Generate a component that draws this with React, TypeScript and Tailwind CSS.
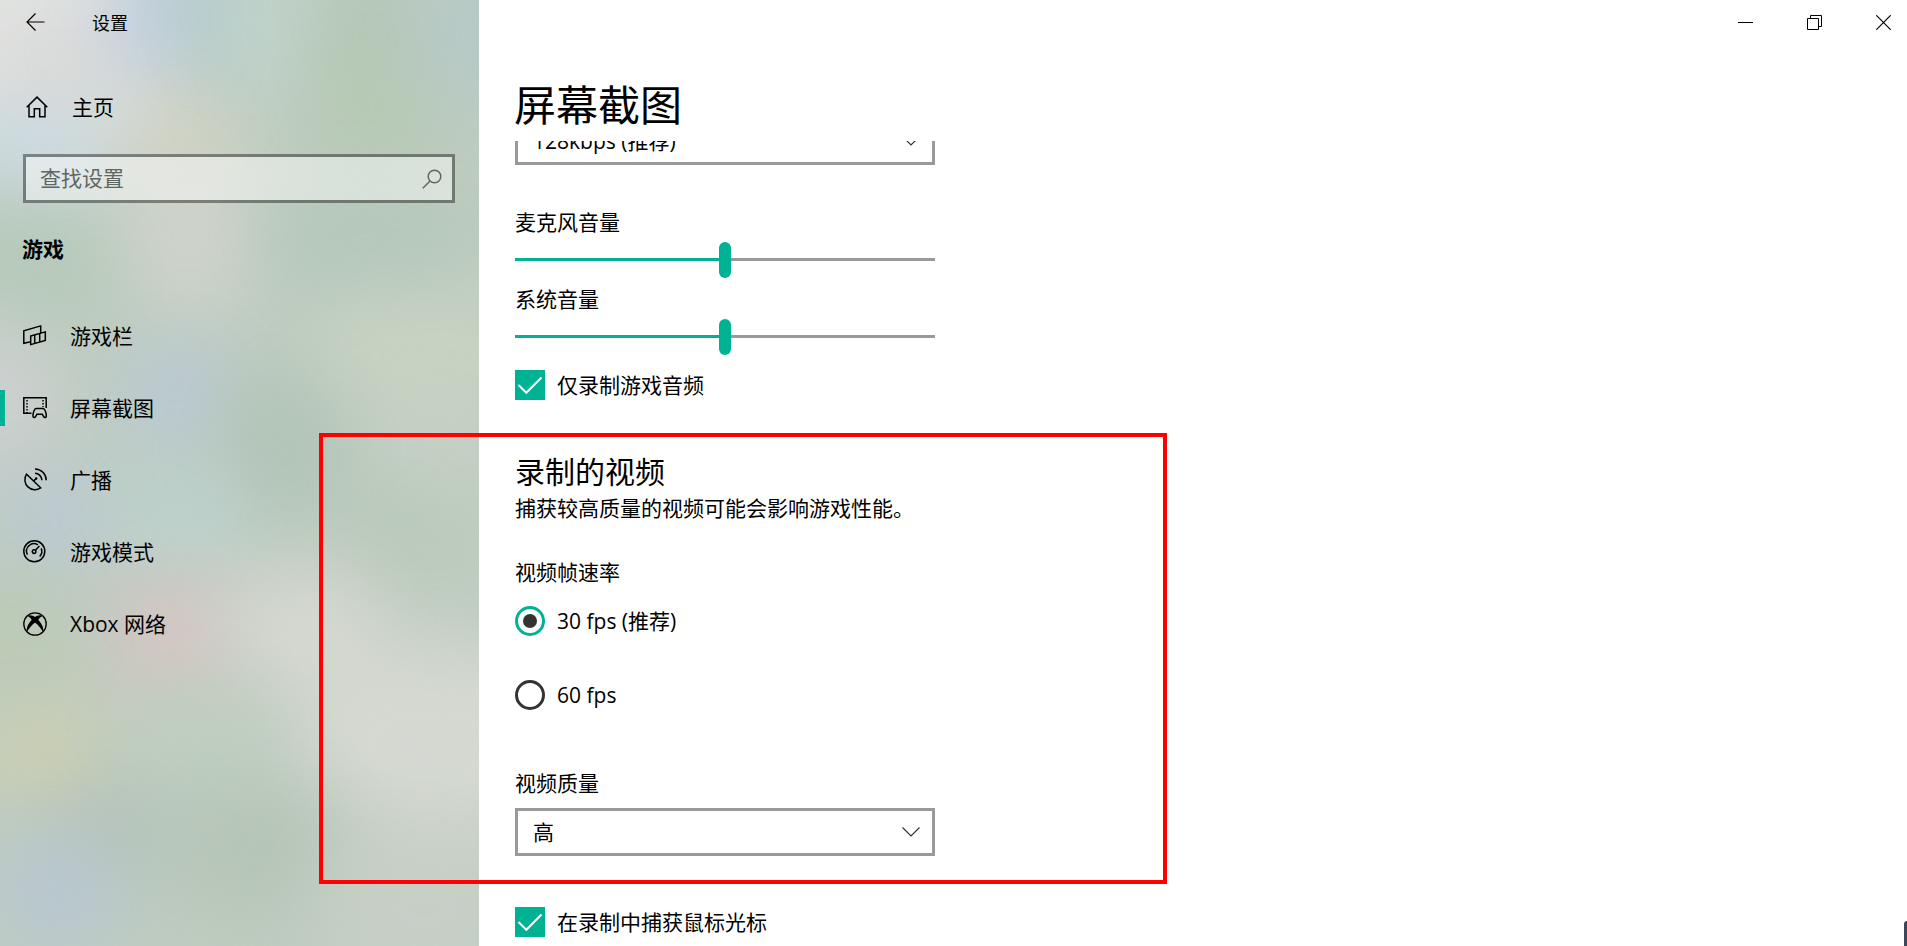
import { useState } from "react";
import type { ReactNode } from "react";

// soft colour patches of the acrylic sidebar
const blobs = [
  "left-[-100px] top-[-100px] h-[250px] w-[260px] bg-[#e8e8e8]",
  "left-[-20px] top-[20px] h-[150px] w-[190px] bg-[#d9d9d6]",
  "left-[100px] top-[-40px] h-[120px] w-[110px] bg-[#bccce0]",
  "left-[190px] top-[-50px] h-[130px] w-[60px] bg-[#aecbca]",
  "left-[235px] top-[-50px] h-[150px] w-[90px] bg-[#c4d7d0]",
  "left-[310px] top-[-50px] h-[190px] w-[110px] bg-[#b3c6b5]",
  "left-[320px] top-[50px] h-[120px] w-[120px] bg-[#b7cab3]",
  "left-[420px] top-[-40px] h-[150px] w-[110px] bg-[#b4c9c9]",
  "left-[-40px] top-[110px] h-[80px] w-[150px] bg-[#c6dae6]",
  "left-[140px] top-[100px] h-[80px] w-[90px] bg-[#dad7c2]",
  "left-[110px] top-[160px] h-[150px] w-[160px] bg-[#d2d5cd]",
  "left-[260px] top-[180px] h-[120px] w-[210px] bg-[#b3c7ba]",
  "left-[-60px] top-[220px] h-[110px] w-[170px] bg-[#b3c9b8]",
  "left-[310px] top-[300px] h-[110px] w-[230px] bg-[#cad4c4]",
  "left-[360px] top-[400px] h-[80px] w-[160px] bg-[#c8d2c6]",
  "left-[-90px] top-[320px] h-[150px] w-[150px] bg-[#d0d2d4]",
  "left-[120px] top-[345px] h-[100px] w-[110px] bg-[#b9c8dc]",
  "left-[220px] top-[370px] h-[160px] w-[120px] bg-[#afc2b5]",
  "left-[0px] top-[470px] h-[100px] w-[110px] bg-[#bbc8da]",
  "left-[110px] top-[470px] h-[100px] w-[140px] bg-[#bcd3d1]",
  "left-[300px] top-[490px] h-[110px] w-[150px] bg-[#b7c8b8]",
  "left-[110px] top-[580px] h-[120px] w-[125px] bg-[#dcc3c4]",
  "left-[220px] top-[560px] h-[140px] w-[170px] bg-[#d9dad4]",
  "left-[290px] top-[640px] h-[210px] w-[280px] bg-[#d9dbd5]",
  "left-[-50px] top-[580px] h-[110px] w-[120px] bg-[#bbc9b2]",
  "left-[-10px] top-[710px] h-[90px] w-[110px] bg-[#d2d0ac]",
  "left-[120px] top-[680px] h-[120px] w-[150px] bg-[#bfcfc0]",
  "left-[50px] top-[790px] h-[80px] w-[120px] bg-[#b0beb7]",
  "left-[-10px] top-[840px] h-[110px] w-[130px] bg-[#b7c6d6]",
  "left-[170px] top-[790px] h-[120px] w-[190px] bg-[#b3c3b5]",
  "left-[310px] top-[820px] h-[180px] w-[230px] bg-[#c8d0c8]",
];

function Icon({ children, size = 24 }: { children: ReactNode; size?: number }) {
  return (
    <svg
      width={size}
      height={size}
      viewBox={`0 0 ${size} ${size}`}
      fill="none"
      stroke="currentColor"
      strokeWidth="1.5"
      aria-hidden="true"
      className="shrink-0"
    >
      {children}
    </svg>
  );
}

const navItems = [
  {
    label: "游戏栏",
    icon: (
      <>
        <path d="M7.7 17.7 .8 19.3V6.9L17.7 1.9V9" />
        <path d="M7.7 12 22.3 7.9v8.5L7.7 20.6zM11.7 11v8.3M16.7 9.6V18" />
      </>
    ),
  },
  {
    label: "屏幕截图",
    active: true,
    icon: (
      <>
        <path d="M8.5 17.2H.8V1.8h22.4V12" />
        <path d="M4 4v13M20 4v7" strokeDasharray="1.5 1.5" />
        <path d="M13 12.5h7.2c1.6 0 2.9 4.6 3.1 7 .1 2.4-1.9 2.4-2.8.8l-1.2-2h-5.4l-1.2 2c-.9 1.6-2.9 1.6-2.8-.8.2-2.4 1.5-7 3.1-7z" />
      </>
    ),
  },
  {
    label: "广播",
    icon: (
      <>
        <path d="M3.5 6.2a10 10 0 0 0 14.2 13.6z" />
        <path d="m10.7 13 2.6-2.6M12 5.3a7 7 0 0 1 6.9 6.9M12 .9a11.3 11.3 0 0 1 11.2 11.3" />
        <circle cx="13.2" cy="10.5" r="1.2" fill="currentColor" stroke="none" />
      </>
    ),
  },
  {
    label: "游戏模式",
    icon: (
      <>
        <circle cx="11.3" cy="11.3" r="10.5" />
        <path d="M4.4 14.6a7.4 7.4 0 0 1 10.5-9.7M18.2 8.4a7.4 7.4 0 0 1-1.5 8" />
        <circle cx="11.1" cy="11.6" r="1.8" />
        <path d="m12.4 10.3 4-4.2" />
      </>
    ),
  },
  {
    label: "Xbox 网络",
    icon: (
      <>
        <circle cx="12" cy="12" r="11.2" strokeWidth="1.3" />
        <path
          d="M4.6 4.3C6.8 2.3 9.5 3.4 12 5c2.5-1.6 5.2-2.7 7.4-.7-1.6.2-3 1.7-4.1 3.4 3.2 3.6 6 8.3 4.6 12.3-1.5-3.2-4.8-7-7.900-9.400C8.900 13 5.600 16.800 4.100 20c-1.400-4 1.400-8.700 4.600-12.300C7.600 6 6.200 4.500 4.600 4.300z"
          fill="currentColor"
          stroke="none"
        />
      </>
    ),
  },
];

function Sidebar() {
  return (
    <aside className="relative isolate w-[479px] shrink-0 overflow-hidden bg-[#bfccc0]">
      <div className="absolute inset-0 -z-10" aria-hidden="true">
        {blobs.map((b) => (
          <div key={b} className={`absolute rounded-full opacity-85 blur-[38px] ${b}`} />
        ))}
      </div>

      <header className="flex h-[45px] items-center pl-[26px]">
        <button aria-label="返回">
          <Icon size={19}>
            <path d="M18.5 9H1M9.5.5 1 9l8.500 8.500" strokeWidth="1.2" />
          </Icon>
        </button>
        <span className="ml-[47px] text-[18px] leading-7">设置</span>
      </header>

      <a href="#home" className="mt-8 flex h-[60px] items-center gap-6 pl-[26px]">
        <Icon size={22}>
          <path d="M.7 11.3 11 1.100l10.300 10.200M3 9.300v11.400h5.300v-8h5.400v8H19V9.300" />
        </Icon>
        主页
      </a>

      <div className="mr-6 ml-[23px] mt-[17px] flex h-[49px] items-center border-3 border-black/40 bg-white/45 bg-clip-padding pr-[10px] pl-[14px]">
        <input
          aria-label="查找设置"
          placeholder="查找设置"
          className="h-7 min-w-0 flex-1 bg-transparent pb-[2px] outline-none placeholder:text-[#5f6663]"
        />
        <button aria-label="搜索" className="text-[#5f6663]">
          <Icon size={20}>
            <circle cx="12.5" cy="7.5" r="6.3" />
            <path d="M8 12 .8 19.2" />
          </Icon>
        </button>
      </div>

      <h2 className="mt-8 pl-[22px] font-bold">游戏</h2>

      <nav className="mt-[37px]">
        {navItems.map((item) => (
          <a key={item.label} href="#nav" className="flex h-[72px] items-center">
            <span className={item.active ? "h-9 w-[5px] bg-[#00b294]" : "h-9 w-[5px]"} />
            <span className="mr-[23px] ml-[18px]">
              <Icon>{item.icon}</Icon>
            </span>
            {item.label}
          </a>
        ))}
      </nav>
    </aside>
  );
}

function Dropdown({ id, label, options }: { id: string; label: string; options: string[] }) {
  return (
    <div className="relative h-12 max-w-[420px]">
      <select
        id={id}
        aria-label={label}
        className="size-full appearance-none border-3 border-[#999] bg-white px-[15px] outline-none"
      >
        {options.map((o) => (
          <option key={o}>{o}</option>
        ))}
      </select>
      <svg
        width="18"
        height="10"
        viewBox="0 0 18 10"
        fill="none"
        stroke="#333"
        strokeWidth="1.2"
        className="pointer-events-none absolute top-[19px] right-[15px]"
      >
        <path d="m.5.5 8.500 8.500L17.500.5" />
      </svg>
    </div>
  );
}

function Slider({ id, label }: { id: string; label: string }) {
  const [value, setValue] = useState(50);

  return (
    <div className="mb-[7px] max-w-[420px]">
      <label htmlFor={id} className="block">
        {label}
      </label>
      <input
        id={id}
        type="range"
        value={value}
        onChange={(e) => setValue(Number(e.target.value))}
        className="mt-[6px] block h-9 w-full appearance-none bg-[length:100%_3px] bg-[position:0_16px] bg-no-repeat outline-none [&::-webkit-slider-thumb]:h-9 [&::-webkit-slider-thumb]:w-3 [&::-webkit-slider-thumb]:appearance-none [&::-webkit-slider-thumb]:rounded-full [&::-webkit-slider-thumb]:bg-[#00b294]"
        style={{ backgroundImage: `linear-gradient(to right, #00b294 ${value}%, #999 ${value}%)` }}
      />
    </div>
  );
}

function Checkbox({ label }: { label: string }) {
  return (
    <label className="flex h-[30px] items-center gap-3">
      <span className="relative size-[30px]">
        <input
          type="checkbox"
          defaultChecked
          className="peer block size-[30px] appearance-none border-3 border-[#333] checked:border-[#00b294] checked:bg-[#00b294]"
        />
        <svg
          viewBox="0 0 30 30"
          fill="none"
          stroke="#fff"
          strokeWidth="2"
          className="pointer-events-none absolute inset-0 hidden peer-checked:block"
        >
          <path d="m3.500 15 7.800 7.800L26.500 7.500" />
        </svg>
      </span>
      {label}
    </label>
  );
}

function Radio({ label, checked }: { label: string; checked?: boolean }) {
  return (
    <label className="flex h-[30px] items-center gap-3">
      <span className="relative size-[30px]">
        <input
          type="radio"
          name="fps"
          defaultChecked={checked}
          className="peer block size-[30px] appearance-none rounded-full border-3 border-[#333] checked:border-[#00b294]"
        />
        <span className="pointer-events-none absolute inset-2 hidden rounded-full bg-[#333] peer-checked:block" />
      </span>
      {label}
    </label>
  );
}

function WindowControls() {
  return (
    <header className="flex h-[45px] shrink-0 items-center justify-end gap-[54px] pr-4">
      <button aria-label="最小化">
        <Icon size={15}>
          <path d="M0 7.500h15" strokeWidth="1" />
        </Icon>
      </button>
      <button aria-label="还原">
        <Icon size={15}>
          <path d="M.5 3.500h11v11H.5zM3.500 3.500v-3h11v11h-3" strokeWidth="1" />
        </Icon>
      </button>
      <button aria-label="关闭">
        <Icon size={15}>
          <path d="m.3.3 14.400 14.400M14.700.3.3 14.700" strokeWidth="1.2" />
        </Icon>
      </button>
    </header>
  );
}

export default function App() {
  return (
    <div className="relative flex h-screen overflow-hidden bg-white font-['Open_Sans','Noto_Sans_CJK_SC',sans-serif] text-[21px] leading-7 text-black">
      <Sidebar />

      <main className="flex min-w-0 flex-1 flex-col">
        <WindowControls />
        <h1 className="h-24 shrink-0 px-[35px] pt-8 text-[42px] leading-[56px]">屏幕截图</h1>

        <div className="min-h-0 flex-1 overflow-hidden px-9">
          {/* list is scrolled so the first drop-down is half hidden */}
          <div className="-mt-6">
            <Dropdown id="bitrate" label="音频质量" options={["128kbps (推荐)", "96kbps", "160kbps"]} />
          </div>

          <div className="mt-[43px]">
            <Slider id="mic" label="麦克风音量" />
            <Slider id="system" label="系统音量" />
          </div>
          <div className="mt-[15px]">
            <Checkbox label="仅录制游戏音频" />
          </div>

          <h2 className="mt-[54px] text-[30px] leading-9">录制的视频</h2>
          <p className="mt-1">捕获较高质量的视频可能会影响游戏性能。</p>

          <fieldset className="mt-9">
            <legend>视频帧速率</legend>
            <div className="mt-5 flex flex-col gap-11">
              <Radio label="30 fps (推荐)" checked />
              <Radio label="60 fps" />
            </div>
          </fieldset>

          <label htmlFor="quality" className="mt-[59px] mb-[11px] block">
            视频质量
          </label>
          <Dropdown id="quality" label="视频质量" options={["高", "标准"]} />

          <div className="mt-[51px]">
            <Checkbox label="在录制中捕获鼠标光标" />
          </div>
        </div>
      </main>

      {/* highlight frame over the video section */}
      <div className="pointer-events-none absolute top-[433px] left-[319px] h-[451px] w-[848px] border-4 border-[#ff0000]" />
      <div className="absolute right-0 bottom-0 h-[25px] w-[3px] rounded-tl-sm bg-[#3d465a]" />
    </div>
  );
}
